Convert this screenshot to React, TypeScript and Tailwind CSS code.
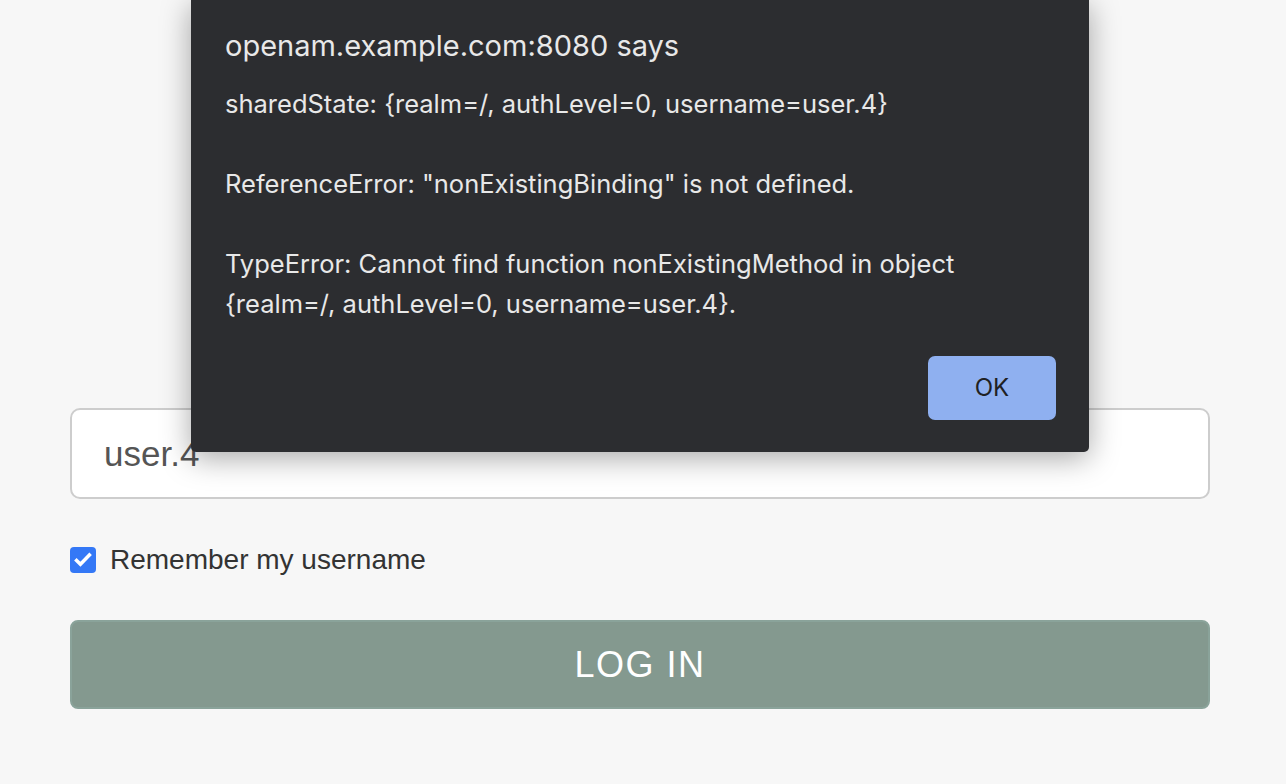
export default function App() {
  return (
    <div className="relative min-h-[784px] w-full overflow-hidden bg-[#f7f7f7] font-['Liberation_Sans',Arial,sans-serif]">
      <main className="flex flex-col pl-[70px] pr-[76px] pt-[408px]">
        <div className="flex h-[91px] items-center rounded-[10px] border-2 border-[#cdcdcd] bg-white px-[32px]">
          <span className="text-[35px] leading-[40px] text-[#555]">user.4</span>
        </div>

        <label className="mt-[45px] flex h-[32px] items-center gap-[14px]">
          <span className="flex h-[26px] w-[26px] items-center justify-center rounded-[4px] bg-[#3478f6]">
            <svg viewBox="0 0 24 24" className="h-[22px] w-[22px]" fill="none" stroke="white" strokeWidth="3.8" strokeLinecap="square">
              <path d="M5 12.5l4.2 4.2L19 6.5" />
            </svg>
          </span>
          <span className="text-[28px] leading-[32px] text-[#333]">Remember my username</span>
        </label>

        <button className="mt-[44px] h-[89px] rounded-[8px] border-2 border-[#8aa39a] bg-[#84998f] text-[36px] leading-[40px] tracking-[1.5px] text-white">
          LOG IN
        </button>
      </main>

      <div className="absolute left-[191px] top-0 h-[452px] w-[898px] rounded-b-[5px] bg-[#2c2d30] pl-[34px] pr-[33px] pt-[28px] font-['Inter',sans-serif] text-[#e8e8e8] shadow-[0_6px_30px_rgba(0,0,0,0.35)]">
        <h1 className="text-[29px] leading-[36px]">openam.example.com:8080 says</h1>
        <p className="mt-[20px] whitespace-pre-wrap text-[25.5px] leading-[40px]">
          {"sharedState: {realm=/, authLevel=0, username=user.4}\n\nReferenceError: \"nonExistingBinding\" is not defined.\n\nTypeError: Cannot find function nonExistingMethod in object\n{realm=/, authLevel=0, username=user.4}."}
        </p>
        <div className="mt-[32px] flex justify-end">
          <button className="h-[64px] w-[128px] rounded-[7px] bg-[#8fb0f0] text-[24px] text-[#202124]">OK</button>
        </div>
      </div>
    </div>
  );
}
